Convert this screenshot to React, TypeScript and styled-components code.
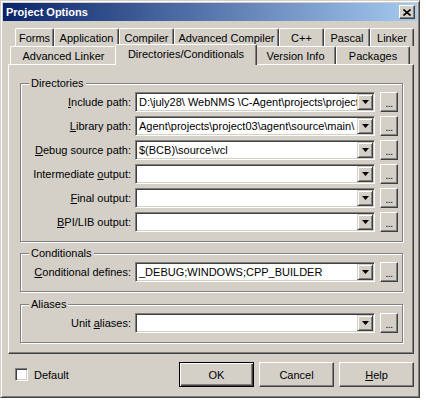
import React from "react";
import styled, { createGlobalStyle } from "styled-components";

const FACE = "#d4d0c8";
const SHADOW = "#808080";
const DARK = "#404040";
const LIGHT = "#ffffff";

const Global = createGlobalStyle`
  html, body { margin: 0; padding: 0; background: #ffffff; }
  body {
    font-family: "Liberation Sans", Arial, sans-serif;
    font-size: 11px;
    color: #000;
  }
  * { box-sizing: border-box; }
`;

const Window = styled.div`
  width: 420px;
  height: 398px;
  background: ${FACE};
  border: 1px solid;
  border-color: ${FACE} ${DARK} ${DARK} ${FACE};
  box-shadow: inset 1px 1px 0 ${LIGHT}, inset -1px -1px 0 ${SHADOW};
  padding: 2px;
  display: flex;
  flex-direction: column;
`;

const TitleBar = styled.div`
  height: 18px;
  flex: none;
  display: flex;
  align-items: center;
  justify-content: space-between;
  padding: 0 2px 0 3px;
  background: linear-gradient(to right, #0a246a, #a6caf0);
`;

const Title = styled.span`
  color: #fff;
  font-weight: bold;
  font-size: 11px;
`;

const CloseButton = styled.div`
  width: 16px;
  height: 14px;
  background: ${FACE};
  border: 1px solid;
  border-color: ${LIGHT} ${DARK} ${DARK} ${LIGHT};
  box-shadow: inset -1px -1px 0 ${SHADOW};
  display: flex;
  align-items: center;
  justify-content: center;
`;

const Body = styled.div`
  flex: 1;
  display: flex;
  flex-direction: column;
  padding: 7px 3px 0 5px;
`;

const TabStrip = styled.div`
  display: flex;
  flex-direction: column;
`;

const TabRow = styled.div<{ $indent: number }>`
  display: flex;
  height: 18px;
  padding-left: ${(p) => p.$indent}px;
`;

const Tab = styled.div<{ $w: number; $active?: boolean }>`
  flex: none;
  width: ${(p) => p.$w}px;
  height: ${(p) => (p.$active ? 21 : 18)}px;
  align-self: flex-end;
  margin: ${(p) => (p.$active ? "0 -2px -1px -2px" : "0")};
  padding-bottom: ${(p) => (p.$active ? 2 : 0)}px;
  position: relative;
  z-index: ${(p) => (p.$active ? 2 : 0)};
  background: ${FACE};
  border-top: 1px solid ${LIGHT};
  border-left: 1px solid ${LIGHT};
  border-right: 1px solid ${DARK};
  box-shadow: inset -1px 0 0 ${SHADOW};
  border-radius: 2px 2px 0 0;
  display: flex;
  align-items: center;
  justify-content: center;
  white-space: nowrap;
`;

const Panel = styled.div`
  height: 290px;
  flex: none;
  border: 1px solid;
  border-color: ${LIGHT} ${DARK} ${DARK} ${LIGHT};
  box-shadow: inset -1px -1px 0 ${SHADOW};
  padding: 12px 10px 0 11px;
  display: flex;
  flex-direction: column;
`;

const Group = styled.fieldset<{ $gap: number }>`
  margin: ${(p) => p.$gap}px 0 0 0;
  padding: 2px 3px 9px 0;
  min-width: 0;
  border: 1px solid ${SHADOW};
  box-shadow: 1px 1px 0 ${LIGHT}, inset 1px 1px 0 ${LIGHT};
  display: flex;
  flex-direction: column;
  gap: 4px;
`;

const Legend = styled.legend`
  margin-left: 8px;
  padding: 0 2px;
  line-height: 13px;
  font-size: 11px;
  background: ${FACE};
`;

const Row = styled.div`
  display: flex;
  align-items: center;
  height: 20px;
`;

const Label = styled.label`
  width: 110px;
  flex: none;
  text-align: right;
  margin-right: 4px;
  white-space: nowrap;
`;

const Combo = styled.div`
  width: 240px;
  height: 20px;
  flex: none;
  background: #fff;
  border: 1px solid;
  border-color: ${SHADOW} ${LIGHT} ${LIGHT} ${SHADOW};
  box-shadow: inset 1px 1px 0 ${DARK}, inset -1px -1px 0 ${FACE};
  padding: 1px;
  display: flex;
  align-items: stretch;
`;

const ComboText = styled.div`
  flex: 1;
  min-width: 0;
  overflow: hidden;
  white-space: nowrap;
  padding-left: 2px;
  line-height: 16px;
`;

const DropButton = styled.div`
  width: 16px;
  flex: none;
  background: ${FACE};
  border: 1px solid;
  border-color: ${FACE} ${DARK} ${DARK} ${FACE};
  box-shadow: inset 1px 1px 0 ${LIGHT}, inset -1px -1px 0 ${SHADOW};
  display: flex;
  align-items: center;
  justify-content: center;
`;

const Browse = styled.div`
  width: 18px;
  height: 20px;
  flex: none;
  margin-left: 5px;
  background: ${FACE};
  border: 1px solid;
  border-color: ${LIGHT} ${DARK} ${DARK} ${LIGHT};
  box-shadow: inset -1px -1px 0 ${SHADOW};
  display: flex;
  align-items: center;
  justify-content: center;
  padding-top: 3px;
  font-size: 10px;
  letter-spacing: -0.5px;
`;

const Footer = styled.div`
  margin-top: 8px;
  height: 25px;
  display: flex;
  align-items: center;
`;

const Check = styled.div`
  width: 13px;
  height: 13px;
  margin-left: 7px;
  background: #fff;
  border: 1px solid;
  border-color: ${SHADOW} ${LIGHT} ${LIGHT} ${SHADOW};
  box-shadow: inset 1px 1px 0 ${DARK}, inset -1px -1px 0 ${FACE};
`;

const CheckLabel = styled.span`
  margin-left: 6px;
`;

const Buttons = styled.div`
  margin-left: auto;
  display: flex;
  gap: 5px;
`;

const Button = styled.div<{ $default?: boolean }>`
  width: 75px;
  height: 25px;
  background: ${FACE};
  border: 1px solid;
  border-color: ${(p) => (p.$default ? "#000" : `${LIGHT} ${DARK} ${DARK} ${LIGHT}`)};
  box-shadow: ${(p) =>
    p.$default
      ? `inset 1px 1px 0 ${LIGHT}, inset -1px -1px 0 ${DARK}, inset -2px -2px 0 ${SHADOW}`
      : `inset -1px -1px 0 ${SHADOW}`};
  display: flex;
  align-items: center;
  justify-content: center;
`;

const Arrow = () => (
  <svg width="7" height="4" viewBox="0 0 7 4">
    <polygon points="0,0 7,0 3.5,4" fill="#000" />
  </svg>
);

const CloseGlyph = () => (
  <svg width="8" height="7" viewBox="0 0 8 7">
    <path d="M0.5 0.5 L7.5 6.5 M7.5 0.5 L0.5 6.5" stroke="#000" strokeWidth="1.6" />
  </svg>
);

type Field = { label: React.ReactNode; value: string };

const FieldRow = ({ label, value }: Field) => (
  <Row>
    <Label>{label}</Label>
    <Combo>
      <ComboText>{value}</ComboText>
      <DropButton>
        <Arrow />
      </DropButton>
    </Combo>
    <Browse>...</Browse>
  </Row>
);

const row1 = [
  { t: "Forms", w: 39 },
  { t: "Application", w: 65 },
  { t: "Compiler", w: 55 },
  { t: "Advanced Compiler", w: 105 },
  { t: "C++", w: 45 },
  { t: "Pascal", w: 46 },
  { t: "Linker", w: 44 },
];

const row2 = [
  { t: "Advanced Linker", w: 107 },
  { t: "Directories/Conditionals", w: 142, active: true },
  { t: "Version Info", w: 81 },
  { t: "Packages", w: 74 },
];

const dirs: Field[] = [
  {
    label: (
      <>
        <u>I</u>nclude path:
      </>
    ),
    value: "D:\\july28\\ WebNMS \\C-Agent\\projects\\project03\\agent\\source\\main",
  },
  {
    label: (
      <>
        <u>L</u>ibrary path:
      </>
    ),
    value: "Agent\\projects\\project03\\agent\\source\\main\\",
  },
  {
    label: (
      <>
        <u>D</u>ebug source path:
      </>
    ),
    value: "$(BCB)\\source\\vcl",
  },
  {
    label: (
      <>
        Intermediate <u>o</u>utput:
      </>
    ),
    value: "",
  },
  {
    label: (
      <>
        <u>F</u>inal output:
      </>
    ),
    value: "",
  },
  {
    label: (
      <>
        <u>B</u>PI/LIB output:
      </>
    ),
    value: "",
  },
];

export default function App() {
  return (
    <>
      <Global />
      <Window>
        <TitleBar>
          <Title>Project Options</Title>
          <CloseButton>
            <CloseGlyph />
          </CloseButton>
        </TitleBar>
        <Body>
          <TabStrip>
            <TabRow $indent={7}>
              {row1.map((t) => (
                <Tab key={t.t} $w={t.w}>
                  {t.t}
                </Tab>
              ))}
            </TabRow>
            <TabRow $indent={2}>
              {row2.map((t) => (
                <Tab key={t.t} $w={t.w} $active={t.active}>
                  {t.t}
                </Tab>
              ))}
            </TabRow>
          </TabStrip>
          <Panel>
            <Group $gap={0}>
              <Legend>Directories</Legend>
              {dirs.map((d, i) => (
                <FieldRow key={i} label={d.label} value={d.value} />
              ))}
            </Group>
            <Group $gap={5}>
              <Legend>Conditionals</Legend>
              <FieldRow
                label={
                  <>
                    <u>C</u>onditional defines:
                  </>
                }
                value="_DEBUG;WINDOWS;CPP_BUILDER"
              />
            </Group>
            <Group $gap={6}>
              <Legend>Aliases</Legend>
              <FieldRow
                label={
                  <>
                    Unit <u>a</u>liases:
                  </>
                }
                value=""
              />
            </Group>
          </Panel>
          <Footer>
            <Check />
            <CheckLabel>Default</CheckLabel>
            <Buttons>
              <Button $default>OK</Button>
              <Button>Cancel</Button>
              <Button>
                <span>
                  <u>H</u>elp
                </span>
              </Button>
            </Buttons>
          </Footer>
        </Body>
      </Window>
    </>
  );
}
